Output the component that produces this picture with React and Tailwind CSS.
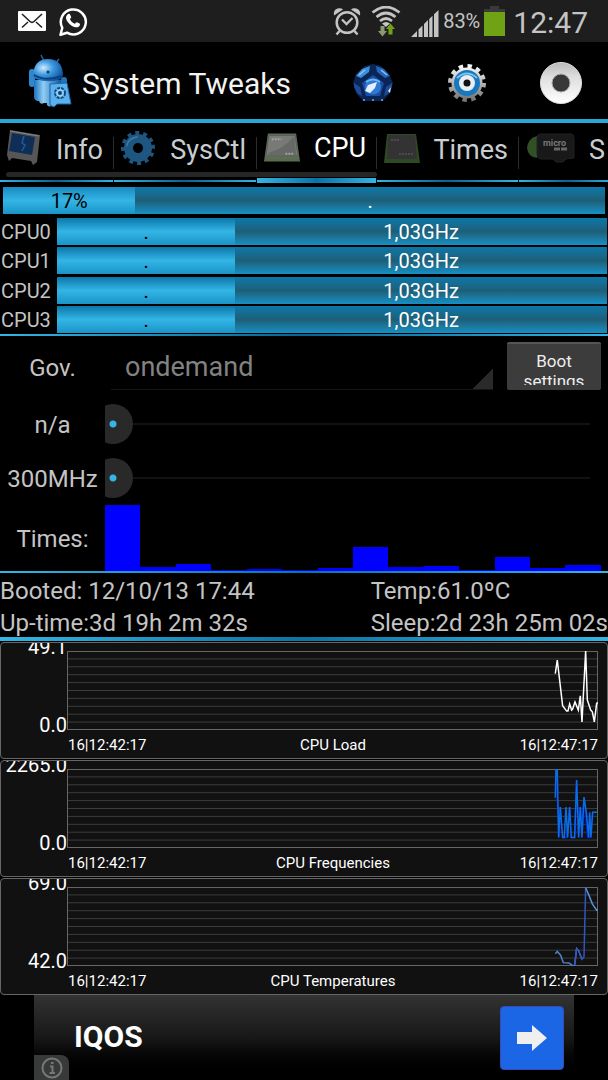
import clsx from "clsx";
import { useState } from "react";

const MailIcon = () => (
  <svg width="28" height="20" viewBox="0 0 28 20" aria-hidden="true">
    <rect width="28" height="20" rx="1" fill="#fff" />
    <path
      d="M4 3l8 7.5q2 1.800 4 0L24 3M4 16.500l6-5.500M24 16.500l-6-5.500"
      fill="none"
      stroke="#1e1e1e"
      strokeWidth="1.500"
    />
  </svg>
);

const WhatsappIcon = () => (
  <svg width="30" height="31" viewBox="0 0 30 31" aria-hidden="true">
    <path
      d="M2.500 28.800l1.800-7A12.500 12.500 0 1 1 9 26.700z"
      fill="none"
      stroke="#fff"
      strokeWidth="2.500"
      strokeLinejoin="round"
    />
    <path
      d="M9.500 8.500c1.200-1 2.300-.8 2.800.4l.9 2.200c.2.700-.8 1.500-1.200 2.100.8 1.900 2.700 3.700 4.900 4.600.6-.4 1.300-1.700 2-1.500l2.700 1.300c.9.500.2 2.300-.6 2.900-2 1.500-4.400.9-7-.6-3.200-1.900-5.700-4.900-6-7.600-.1-1.500.5-3 1.500-3.800z"
      fill="#fff"
    />
  </svg>
);

const AlarmIcon = () => (
  <svg width="28" height="29" viewBox="0 0 28 29" aria-hidden="true">
    <circle cx="14" cy="15.500" r="10.300" fill="none" stroke="#c4c4c4" strokeWidth="2.500" />
    <path d="M9 12.500l4.500 4.500 6-6" fill="none" stroke="#c4c4c4" strokeWidth="2.300" />
    <path d="M6.500 24l-3 3.500M21.500 24l3 3.500" stroke="#c4c4c4" strokeWidth="2.500" />
    <path d="M1 8.500Q0 3 4.500 1.500 8 .5 10 2.500zM27 8.500Q28 3 23.500 1.500 20 .5 18 2.500z" fill="#c4c4c4" />
  </svg>
);

const WifiIcon = () => (
  <svg width="30" height="31" viewBox="0 0 30 31" aria-hidden="true">
    <g fill="none" stroke="#c4c4c4" strokeWidth="2.700">
      <path d="M1.500 6.500Q15-4.500 28.500 6.500" />
      <path d="M5.500 11Q15 3 24.500 11" />
      <path d="M9 15Q15 10 21 15" />
    </g>
    <path d="M11 17.500q4-3 8 0l-4 3.500z" fill="#c4c4c4" />
    <path d="M9.500 20h4v5h2.500l-4.500 5.500L7 25h2.500z" fill="#8c9a72" />
    <path d="M17.500 28.500h4V23H24l-4.500-5.500L15 23h2.500z" fill="#6fa315" />
  </svg>
);

const SignalIcon = () => (
  <svg width="28" height="27" viewBox="0 0 28 27" aria-hidden="true">
    <path
      d="M0 27L6 21v6zM7.500 27v-7.500l4-4V27zM13 27V14l4-4v17zM18.200 27V9l3.300-3.300V27zM23 27V4.300L27.500 0v27z"
      fill="#c4c4c4"
    />
  </svg>
);

const BatteryIcon = () => (
  <svg width="21" height="30" viewBox="0 0 21 30" aria-hidden="true">
    <path d="M6 0h9v3h6v4H0V3h6z" fill="#3a3a3a" />
    <rect y="6" width="21" height="24" fill="#6fa315" />
  </svg>
);

const RobotIcon = () => (
  <svg width="44" height="54" viewBox="0 0 44 54" aria-hidden="true">
    <defs>
      <radialGradient id="robotHead" cx=".35" cy=".4" r=".7">
        <stop offset="0" stopColor="#cfeaff" />
        <stop offset=".45" stopColor="#3f9bdf" />
        <stop offset="1" stopColor="#0b4f9b" />
      </radialGradient>
      <linearGradient id="robotBody">
        <stop offset="0" stopColor="#1d73bd" />
        <stop offset=".35" stopColor="#8fcdf6" />
        <stop offset="1" stopColor="#13569c" />
      </linearGradient>
    </defs>
    <path d="M13 1l3 6M31 5l-4 5" stroke="#2168a6" strokeWidth="1.500" />
    <rect x="1" y="15" width="6" height="18" rx="3" fill="#2c88cf" />
    <rect x="33" y="23" width="6" height="14" rx="3" fill="#2274b7" />
    <path d="M6 26h27v20q0 3-4 3h-4v2q-3 3-6 0v-2h-3q-4 2-5-2-5 0-5-4z" fill="url(#robotBody)" />
    <path d="M5 21Q6 5 20 5t15 15q0 5-5 6-11 3-22-1-3-1-3-4z" fill="url(#robotHead)" />
    <path d="M6 21q12 7 28 1" stroke="#0a4383" strokeWidth="2" fill="none" />
    <circle cx="20" cy="18" r="1.500" fill="#0a3a70" />
    <path d="M22 30l17-1 4 21-14 0-3 3-4-2z" fill="#5ab1ee" stroke="#1a64a8" />
    <circle cx="32" cy="39" r="5" fill="#8fd0fa" stroke="#12497f" strokeWidth="2" strokeDasharray="3 1" />
    <circle cx="32" cy="39" r="2" fill="#0d3f73" />
  </svg>
);

const PentagonIcon = () => (
  <svg width="40" height="38" viewBox="0 0 40 38" aria-hidden="true">
    <path d="M12 2l8-2 8 2 8 8 4 9-3 10-7 8H10l-7-8L0 19l3-9z" fill="#0b2557" />
    <path d="M9 5l8-3-1 6-8 6-5-2z" fill="#3d8fd8" />
    <path d="M31 5l-8-3 1 6 8 6 5-2z" fill="#2566b8" />
    <path d="M6 11l6-5M34 11l-6-5" stroke="#8cc4ee" strokeWidth="1.500" />
    <path d="M1 19l6 4 2 9-4-2-4-7zM39 19l-6 4-2 9 4-2 4-7z" fill="#1c4c97" />
    <path d="M35 27l3-4-1 6z" fill="#dceaff" />
    <path d="M20 11l11 8-4 13H13L9 19z" fill="#1b4fa5" />
    <circle cx="20" cy="22.500" r="8" fill="#2f79d2" />
    <path d="M13 18q7-5 14 0" stroke="#69b7f2" strokeWidth="2" fill="none" />
    <path d="M12 27l3-6 6-2 3-1-2 6-5 5z" fill="#e4f0ff" />
    <path d="M10 36h20" stroke="#76a9dd" strokeWidth="1.500" strokeDasharray="2 7" />
  </svg>
);

const GearIcon = () => (
  <svg width="40" height="40" viewBox="0 0 40 40" aria-hidden="true">
    <defs>
      <linearGradient id="gearMetal" x2="0" y2="1">
        <stop offset="0" stopColor="#f4f4f4" />
        <stop offset="1" stopColor="#777" />
      </linearGradient>
    </defs>
    <circle cx="20" cy="20" r="16.500" fill="none" stroke="url(#gearMetal)" strokeWidth="5" strokeDasharray="4.300 4.340" />
    <circle cx="20" cy="20" r="15.500" fill="url(#gearMetal)" />
    <circle cx="20" cy="20" r="13" fill="#1878bd" />
    <path d="M10 15q10-9 20 0" stroke="#7cc3ec" strokeWidth="2" fill="none" />
    <circle cx="20" cy="20" r="8" fill="#e8eef3" />
    <circle cx="20" cy="20" r="3.500" fill="#111" />
  </svg>
);

const RecordIcon = () => (
  <svg width="42" height="42" viewBox="0 0 42 42" aria-hidden="true">
    <defs>
      <linearGradient id="recordRing" x2="0" y2="1">
        <stop offset="0" stopColor="#b9b9b9" />
        <stop offset=".35" stopColor="#dedede" />
        <stop offset="1" stopColor="#fff" />
      </linearGradient>
    </defs>
    <circle cx="21" cy="21" r="20.500" fill="url(#recordRing)" stroke="#ddd" />
    <circle cx="21" cy="21" r="9" fill="#383838" stroke="#aaa" />
  </svg>
);

const MonitorIcon = () => (
  <svg width="34" height="36" viewBox="0 0 34 36" aria-hidden="true">
    <path d="M3 0l30 5-3 27-4 3-2-4-19-3-3 3-2-6z" fill="#565656" />
    <path d="M5 3l23 4-3 18L2 21z" fill="#0f2e57" />
    <path d="M17 6l-2 7 3 2-3 6" stroke="#245a90" strokeWidth="1.500" fill="none" />
    <path d="M3 1l29 5" stroke="#858585" />
  </svg>
);

const CogIcon = () => (
  <svg width="34" height="36" viewBox="0 0 34 36" aria-hidden="true">
    <g transform="rotate(-12 17 18)">
      <circle cx="17" cy="18" r="14" fill="none" stroke="#1d5681" strokeWidth="6" strokeDasharray="3.600 3.730" />
      <circle cx="17" cy="18" r="9.500" fill="none" stroke="#1d5681" strokeWidth="9" />
      <path d="M6 14q4-8 13-7" fill="none" stroke="#3d7ba6" strokeWidth="1.500" />
    </g>
  </svg>
);

const ChipLightIcon = () => (
  <svg width="36" height="30" viewBox="0 0 37 30" aria-hidden="true">
    <path d="M4 0h29l4 29H0z" fill="#626a5e" />
    <path d="M5 2h27l3 21H2z" fill="#777a76" stroke="#55634c" />
    <path d="M5 20Q20 16 31 3l2 19H4z" fill="#666966" />
    <path d="M1 27h35" stroke="#507339" strokeWidth="2" strokeDasharray="3 1" />
    <path d="M8 6h10M22 21h8" stroke="#a2a2a2" strokeWidth="2" strokeDasharray="2 1" />
  </svg>
);

const ChipDarkIcon = () => (
  <svg width="36" height="29" viewBox="0 0 36 29" aria-hidden="true">
    <path d="M3 0h29l4 29H0z" fill="#2e4a22" />
    <path d="M4 1h27l2 24H3z" fill="#333" />
    <path d="M7 6h9M15 20h14" stroke="#4b4b4b" strokeWidth="2" strokeDasharray="2 1" />
  </svg>
);

const SdIcon = () => (
  <svg width="49" height="30" viewBox="0 0 49 30" aria-hidden="true">
    <path d="M1 15Q2 5 11 3v22Q2 24 1 15z" fill="#315026" />
    <path d="M14 1h31q3 0 3 4v20l-8 1-3 3h-7l-3-3H14q-3-1-3-5V5q0-4 3-4z" fill="#191919" stroke="#222" />
    <text x="17" y="13" fill="#777" fontSize="9" fontWeight="700" fontFamily="Roboto, sans-serif">
      micro
    </text>
    <path d="M28 16h14" stroke="#666" strokeWidth="3" strokeDasharray="6 1" />
  </svg>
);

const tabs = [
  { name: "Info", width: "w-[113px]", icon: MonitorIcon },
  { name: "SysCtl", width: "w-[142px]", icon: CogIcon },
  { name: "CPU", width: "w-[119px]", icon: ChipLightIcon },
  { name: "Times", width: "w-[141px]", icon: ChipDarkIcon },
  { name: "S", width: "w-[96px]", icon: SdIcon },
];

const cores = ["CPU0", "CPU1", "CPU2", "CPU3"];

const sliders = [
  { id: "max", label: "n/a" },
  { id: "min", label: "300MHz" },
];

const times = [66, 4, 7, 1, 2, 1, 3, 24, 4, 5, 1, 14, 3, 6];

const charts = [
  {
    name: "CPU Load",
    max: "49.1",
    min: "0.0",
    lines: [
      {
        color: "#ffffff",
        points:
          "1463,67 1469,27 1485,162 1497,178 1501,178 1506,157 1512,175 1515,172 1522,151 1532,175 1538,133 1543,210 1554,0 1559,145 1569,175 1574,180 1580,210 1587,155 1591,153",
      },
    ],
  },
  {
    name: "CPU Frequencies",
    max: "2265.0",
    min: "0.0",
    lines: [
      {
        color: "#0018f0",
        points:
          "1465,2 1475,203 1478,113 1485,203 1497,203 1506,113 1511,203 1521,203 1527,33 1533,203 1538,113 1543,203 1549,83 1560,203 1568,203 1574,128",
      },
      {
        color: "#0a6ee0",
        points:
          "1463,85 1465,2 1469,2 1473,203 1478,113 1485,203 1490,203 1495,113 1500,203 1506,113 1511,203 1521,203 1527,33 1533,203 1538,113 1543,203 1549,83 1556,128 1563,203 1566,128 1570,203 1575,128 1589,128",
      },
    ],
  },
  {
    name: "CPU Temperatures",
    max: "69.0",
    min: "42.0",
    lines: [
      {
        color: "#4f83c8",
        points: "1463,198 1469,191 1479,202 1487,224 1504,225 1515,233 1521,232 1527,182 1533,189 1543,214",
      },
      { color: "#3355c0", points: "1521,232 1527,182 1533,189 1543,214 1549,207 1554,2" },
      { color: "#5590d8", points: "1554,2 1565,27 1574,50 1587,69 1591,69" },
    ],
  },
];

function StatusBar() {
  return (
    <div className="flex h-[42px] items-center bg-[#1e1e1e] pr-5 pl-[18px] text-[#c4c4c4]">
      <MailIcon />
      <div className="ml-3">
        <WhatsappIcon />
      </div>
      <div className="ml-auto flex items-center">
        <AlarmIcon />
        <div className="ml-2.5">
          <WifiIcon />
        </div>
        <div className="mt-1 ml-2.5">
          <SignalIcon />
        </div>
        <span className="ml-1 text-[20px] leading-6">83%</span>
        <div className="ml-1">
          <BatteryIcon />
        </div>
        <span className="mt-1 ml-2 text-[30px] leading-9">12:47</span>
      </div>
    </div>
  );
}

function Header() {
  return (
    <header className="flex h-[81px] items-center border-b-4 border-[#2ba6d8] pl-7">
      <RobotIcon />
      <h1 className="ml-2.5 flex-1 pt-1.5 text-[30px] leading-9 text-[#f3f3f3]">System Tweaks</h1>
      <button type="button" aria-label="Profiles" className="flex h-full w-[94px] items-center justify-center pt-1">
        <PentagonIcon />
      </button>
      <button type="button" aria-label="Settings" className="flex h-full w-[94px] items-center justify-center pt-1">
        <GearIcon />
      </button>
      <button type="button" aria-label="Record" className="flex h-full w-[94px] items-center justify-center pt-1">
        <RecordIcon />
      </button>
    </header>
  );
}

function Tabs() {
  const [active, setActive] = useState("CPU");

  return (
    <nav className="relative flex h-[60px] overflow-hidden">
      {tabs.map(({ name, width, icon: Icon }, i) => (
        <div key={name} className="flex shrink-0">
          {i > 0 && <div className="mt-3.5 h-8 w-px bg-[#2c2c2c]" />}
          <button
            type="button"
            onClick={() => setActive(name)}
            className={clsx("flex flex-col justify-between", width)}
          >
            <span className="flex h-[54px] w-full items-center justify-between pr-2.5 pl-[7px]">
              <span className="pb-1">
                <Icon />
              </span>
              <span
                className={clsx(
                  "text-[27px] leading-8",
                  name === active ? "pb-1 text-white" : "text-[#c8cdd0]"
                )}
              >
                {name}
              </span>
            </span>
            <span
              className={clsx(
                "w-full bg-linear-to-r",
                name === active
                  ? "h-[5px] from-[#33b5e5] via-[#0a74a8] to-[#33b5e5]"
                  : "mb-px h-0.5 from-[#33b5e5] via-[#0a6490] to-[#33b5e5]"
              )}
            />
          </button>
        </div>
      ))}
      <div className="absolute bottom-1.5 left-1.5 h-[5px] w-[61%] rounded-sm bg-[#262626]" />
    </nav>
  );
}

function UsageBar({ percent, left, right, narrow }) {
  return (
    <div className="flex h-[27px] flex-1 bg-linear-to-b from-[#0878aa] via-[#1d5f78] to-[#1590c4] text-center text-[20px] leading-[29px]">
      <div
        className={clsx(
          "bg-linear-to-b text-black",
          narrow ? "from-[#1a8abf] via-[#33b5e5] to-[#1a94c8]" : "from-[#0878aa] via-[#33b5e5] to-[#1a94c8]"
        )}
        style={{ width: `${percent}%` }}
      >
        {left}
      </div>
      <div className="flex-1 text-white">{right}</div>
    </div>
  );
}

function Usage() {
  return (
    <section className="flex flex-col pt-1">
      <div className="mb-1 flex px-[3px]">
        <UsageBar percent={22} left="17%" right="." narrow />
      </div>
      <div className="flex h-[115px] flex-col justify-between pr-px">
        {cores.map((core) => (
          <div key={core} className="flex h-[27px]">
            <span className="w-[57px] pl-px text-[20px] leading-[29px] text-[#c4c4c4]">{core}</span>
            <UsageBar percent={32.4} left="." right="1,03GHz" />
          </div>
        ))}
      </div>
      <div className="mt-px h-0.5 bg-linear-to-r from-[#33b5e5] via-[#0a6490] to-[#33b5e5]" />
    </section>
  );
}

function Controls() {
  return (
    <section className="text-[24px] leading-8 text-[#c4c4c4]">
      <div className="flex h-[61px] items-start pt-1.5">
        <label htmlFor="governor" className="w-[105px] pt-2.5 text-center">
          Gov.
        </label>
        <select
          id="governor"
          className="ml-1.5 h-12 flex-1 appearance-none border-b border-[#151515] bg-[linear-gradient(135deg,transparent_50%,#2a2a2a_50%)] bg-size-[20px_20px] bg-bottom-right bg-no-repeat pt-0.5 pl-3.5 text-[27px] text-[#828282]"
        >
          <option>ondemand</option>
        </select>
        <button
          type="button"
          className="mr-[7px] ml-3.5 h-12 w-[94px] rounded-xs border-t-2 border-[#555] bg-[#3c3c3c] pt-0.5 text-[17px] text-[#eee]"
        >
          <span className="block h-[34px] overflow-hidden leading-5">
            Boot
            <br />
            settings
          </span>
        </button>
      </div>
      {sliders.map(({ id, label }) => (
        <div key={id} className="flex h-[54px] items-center">
          <label htmlFor={id} className="w-[105px] pt-0.5 text-center">
            {label}
          </label>
          <div className="flex flex-1 overflow-hidden pr-0.5">
            <input
              id={id}
              type="range"
              defaultValue={0}
              className="-ml-3 h-10 flex-1 appearance-none bg-[linear-gradient(#111,#111)] bg-size-[calc(100%-32px)_2px] bg-center bg-no-repeat [&::-webkit-slider-thumb]:h-10 [&::-webkit-slider-thumb]:w-10 [&::-webkit-slider-thumb]:appearance-none [&::-webkit-slider-thumb]:rounded-full [&::-webkit-slider-thumb]:bg-[radial-gradient(circle,#33b5e5_3px,#292929_4px)]"
            />
          </div>
        </div>
      ))}
      <div className="flex h-[66px]">
        <span className="w-[105px] pt-[18px] text-center">Times:</span>
        <div className="mr-[7px] flex flex-1 items-end">
          {times.map((height, i) => (
            <div key={i} className="flex-1 bg-[#0000ff]" style={{ height }} />
          ))}
        </div>
      </div>
      <div className="h-0.5 bg-linear-to-r from-[#33b5e5] via-[#0a74a8] to-[#33b5e5]" />
    </section>
  );
}

function Summary() {
  return (
    <section>
      <div className="flex h-16 pt-0.5 text-[24px] leading-8 whitespace-nowrap text-[#c4c4c4]">
        <div className="w-[61%]">
          <p>Booted: 12/10/13 17:44</p>
          <p>Up-time:3d 19h 2m 32s</p>
        </div>
        <div>
          <p>Temp:61.0ºC</p>
          <p>Sleep:2d 23h 25m 02s</p>
        </div>
      </div>
      <div className="h-1 bg-linear-to-r from-[#33b5e5] via-[#0a74a8] to-[#33b5e5]" />
    </section>
  );
}

function Chart({ name, max, min, lines }) {
  return (
    <div className="h-[117px] overflow-hidden rounded-sm border border-[#666] bg-[#111] pr-[9px] text-white">
      <div className="flex">
        <div className="-mt-1.5 flex h-[98px] w-[66px] flex-col justify-between text-right text-[20px] leading-5">
          <span>{max}</span>
          <span>{min}</span>
        </div>
        <svg className="mt-2 h-[79px] min-w-0 flex-1" viewBox="0 0 1591 234" preserveAspectRatio="none">
          <g fill="none">
            {[1, 2, 3, 4, 5, 6, 7, 8, 9].map((n) => (
              <path key={n} d={`M0 ${n * 23.4}H1591`} stroke="#3c3c3c" vectorEffect="non-scaling-stroke" />
            ))}
            <rect x="1" y="1" width="1589" height="232" stroke="#777" vectorEffect="non-scaling-stroke" />
            {lines.map(({ color, points }) => (
              <polyline key={color} points={points} stroke={color} strokeWidth="1.500" vectorEffect="non-scaling-stroke" />
            ))}
          </g>
        </svg>
      </div>
      <div className="flex justify-between pl-[67px] text-[15px] leading-5">
        <span>16|12:42:17</span>
        <span>{name}</span>
        <span>16|12:47:17</span>
      </div>
    </div>
  );
}

function AdBanner() {
  return (
    <div className="mr-[34px] ml-[34px] flex h-[85px] items-start justify-between bg-linear-to-b from-[#333] via-[#181818] to-black pr-2.5">
      <div className="flex h-full flex-col justify-between">
        <span className="ml-10 pt-6 text-[30px] leading-9 font-bold text-white">IQOS</span>
        <button
          type="button"
          aria-label="Ad info"
          className="flex h-[25px] w-[35px] items-center justify-center rounded-tr-lg bg-[#383a3a]"
        >
          <svg width="22" height="22" viewBox="0 0 22 22" fill="none" stroke="#777" strokeWidth="2">
            <circle cx="11" cy="11" r="9.500" />
            <path d="M9 9.500h2.500V16M8.500 16h5.500M10 6h2.500" />
          </svg>
        </button>
      </div>
      <a
        href="#"
        aria-label="Open IQOS"
        className="mt-[11px] flex size-16 items-center justify-center rounded-sm border border-[#3b49b5] bg-[#1a66e5]"
      >
        <svg width="30" height="26" viewBox="0 0 30 26">
          <path d="M0 7h15V0l15 13-15 13v-7H0z" fill="#efefef" />
        </svg>
      </a>
    </div>
  );
}

export default function App() {
  return (
    <main className="min-h-screen overflow-hidden bg-black font-[Roboto,sans-serif]">
      <StatusBar />
      <Header />
      <Tabs />
      <Usage />
      <Controls />
      <Summary />
      <div className="flex flex-col gap-px pt-px">
        {charts.map((chart) => (
          <Chart key={chart.name} {...chart} />
        ))}
      </div>
      <AdBanner />
    </main>
  );
}
